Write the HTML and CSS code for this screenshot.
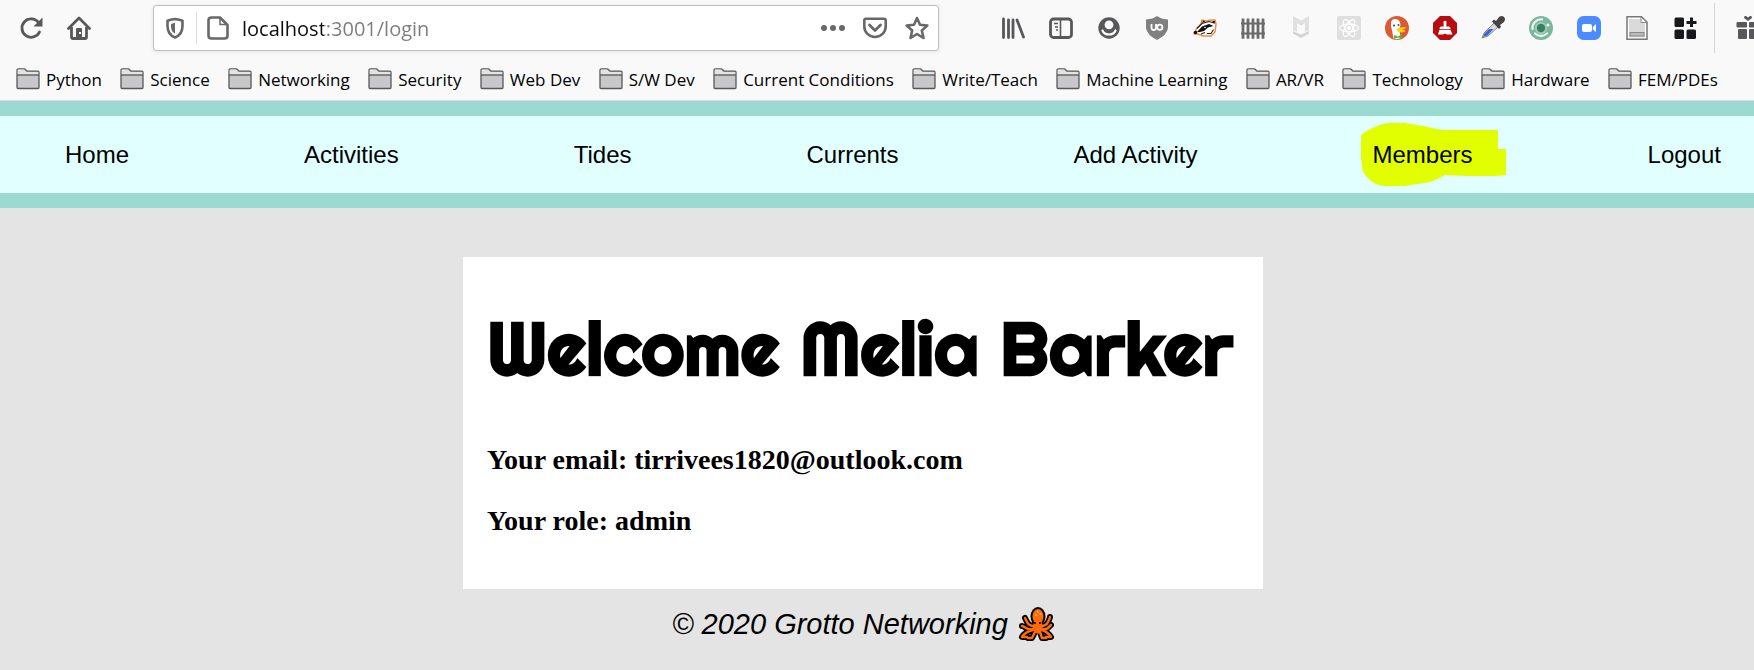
FILE: index.html
```html
<!DOCTYPE html>
<html lang="en">
	<head>
		<meta charset="utf-8">
		<title>Grotto Networking</title>
		<link rel="stylesheet" href="styles.css">
	</head>
	<body>
		<svg class="defs" aria-hidden="true">
			<symbol id="folder" viewBox="0 0 24 24">
				<path d="M1 20.500V3.500Q1 1.800 2.500 1.800H8Q9 1.800 9.600 2.800L11 4.200H22Q23 4.200 23 5.300V20.500Q23 21.500 22 21.500H2Q1 21.500 1 20.500Z" fill="#c8c8ca" stroke="#58585a" stroke-width="1.300"/>
				<path d="M1.700 7.500V3.500Q1.700 2.500 2.600 2.500H8L10.600 5H22.300V7.500Z" fill="#e4e4e5"/>
				<path d="M1 8H23" stroke="#58585a" stroke-width="1.300"/>
			</symbol>
		</svg>
		<div class="chrome">
			<div class="toolbar">
				<button class="tool" aria-label="Reload"><svg viewBox="0 0 24 24"><path d="M20.500 16A9.200 9.200 0 1 1 19.500 6.500" fill="none" stroke="#58585a" stroke-width="2.800" stroke-linecap="round"/><path d="M23.500 1.500V10.500H14.500Z" fill="#58585a"/></svg></button>
				<button class="tool" aria-label="Home"><svg viewBox="0 0 24 24"><path d="M1.500 12.500L12 2L22.500 12.500" fill="none" stroke="#58585a" stroke-width="2.800" stroke-linecap="round" stroke-linejoin="round"/><path d="M4.500 11V21Q4.500 22.500 6 22.500H18Q19.500 22.500 19.500 21V11" fill="none" stroke="#58585a" stroke-width="2.800"/><path d="M9 22V13Q9 12 10 12H14Q15 12 15 13V22Z" fill="#58585a"/><rect x="12" y="16" width="2" height="2" fill="#f9f9fa"/></svg></button>
				<div class="urlbar">
					<button aria-label="Tracking protection"><svg viewBox="0 0 24 24"><path d="M12 3C9 3.300 6 4 4.500 4.700V10C4.500 16 7 19.500 12 21.500C17 19.500 19.500 16 19.500 10V4.700C18 4 15 3.300 12 3Z" fill="none" stroke="#68686a" stroke-width="2.600" stroke-linejoin="round"/><path d="M12 6.800L8 8V11Q8.300 16 12 17.500Z" fill="#68686a"/></svg></button>
					<span class="line"></span>
					<button aria-label="Site information"><svg viewBox="0 0 24 24"><path d="M14 1.500H5.500Q2.500 1.500 2.500 4.500V19.500Q2.500 22.500 5.500 22.500H18.500Q21.500 22.500 21.500 19.500V9Z" fill="none" stroke="#68686a" stroke-width="2.600" stroke-linejoin="round"/><path d="M14 1.500V8.500H21.500" fill="none" stroke="#68686a" stroke-width="1.500"/></svg></button>
					<input class="address" type="text" aria-label="Address" value="localhost:3001/login">
					<button aria-label="Page actions"><svg viewBox="0 0 24 24"><g fill="#68686a"><circle cx="3" cy="12" r="3"/><circle cx="12" cy="12" r="3"/><circle cx="21" cy="12" r="3"/></g></svg></button>
					<button aria-label="Save to Pocket"><svg viewBox="0 0 24 24"><path d="M3 2.700H21Q22.700 2.700 22.700 4.500V10.500A10.700 10.500 0 0 1 1.300 10.500V4.500Q1.300 2.700 3 2.700Z" fill="none" stroke="#68686a" stroke-width="2.600"/><path d="M6.500 9L12 14.500L17.500 9" fill="none" stroke="#68686a" stroke-width="2.800" stroke-linecap="round" stroke-linejoin="round"/></svg></button>
					<button aria-label="Bookmark this page"><svg viewBox="0 0 24 24"><path d="M12 2L15 8.800L22.300 9.600L16.800 14.500L18.500 22L12 18L5.500 22L7.200 14.500L1.700 9.600L9 8.800Z" fill="none" stroke="#68686a" stroke-width="2.600" stroke-linejoin="round"/></svg></button>
				</div>
				<button class="tool" aria-label="Library"><svg viewBox="0 0 24 24"><path d="M2.500 3V21.500M7.500 4V21.500M12 4V21.500M16 4L22.500 21" fill="none" stroke="#58585a" stroke-width="2.800" stroke-linecap="round"/></svg></button>
				<button class="tool" aria-label="Sidebars"><svg viewBox="0 0 24 24"><rect x="1.500" y="3" width="21" height="18.500" rx="3" fill="none" stroke="#58585a" stroke-width="2.800"/><path d="M11.500 3V21M5 7.500H9M6 11H9M7 14H9" stroke="#58585a" stroke-width="1.600"/></svg></button>
				<button class="tool" aria-label="Account"><svg viewBox="0 0 24 24"><circle cx="12" cy="12" r="10.700" fill="#58585a"/><circle cx="12" cy="8.800" r="4.400" fill="#f9f9fa"/><path d="M5.500 14.500Q7 18.500 12 18.500T18.500 14.500" fill="none" stroke="#f9f9fa" stroke-width="2.200" stroke-linecap="round"/></svg></button>
				<button class="tool" aria-label="Content blocker"><svg viewBox="0 0 24 24"><path d="M12 0Q16 3 23 3.500V12Q22 19 12 24Q2 19 1 12V3.500Q8 3 12 0Z" fill="#808080"/><path d="M6.500 8V11.500Q6.500 14 8.800 14T11 11.500V8" fill="none" stroke="#fff" stroke-width="1.800"/><circle cx="14.800" cy="11.200" r="2.600" fill="none" stroke="#fff" stroke-width="1.800"/></svg></button>
				<button class="tool" aria-label="Privacy badger"><svg viewBox="0 0 24 24"><path d="M1 18L4 12L8 8L9 4L13 5L18 4L22 4L23 8L22 16L18 20L10 20L5 18Z" fill="#fff" stroke="#f08a3c" stroke-width="1.500" stroke-linejoin="round"/><path d="M4 16L9 10.500L16 8L20.500 10L15 11.500L11 15L7 16Z" fill="#111"/><path d="M4 12.500L9 7.500L16 5.500L21 7M8 18L12 16.500M14 17.500H18L20.500 13.500" fill="none" stroke="#222" stroke-width="1.100"/><path d="M9 7L10 4.500L12.500 5.500ZM19 5L22 5L21.500 8Z" fill="#111"/><circle cx="2.500" cy="16.500" r="1.800" fill="#111"/><circle cx="12" cy="11.500" r=".800" fill="#fff"/></svg></button>
				<button class="tool" aria-label="Fence"><svg viewBox="0 0 24 24"><path d="M2 2.500V22.800M7 2.500V22.800M12 2.500V22.800M17 2.500V22.800M22 2.500V22.800" stroke="#6b6b6b" stroke-width="2.800"/><path d="M0 7.500H24M0 17.500H24" stroke="#6b6b6b" stroke-width="1.800"/></svg></button>
				<button class="tool" aria-label="Web advisor"><svg viewBox="0 0 24 24"><path d="M4 0L12 4.500L20 0V14L16 16V7L12 9.500L8 7V16L4 14Z" fill="#e0e0e1"/><path d="M4 15L12 18.500L20 15V17.500L12 22L4 17.500Z" fill="#d4d4d5"/></svg></button>
				<button class="tool" aria-label="React tools"><svg viewBox="0 0 24 24"><rect width="24" height="24" rx="2" fill="#dfdfdf"/><g fill="none" stroke="#fff" stroke-width="1.200"><ellipse cx="12" cy="12" rx="9.500" ry="3.800"/><ellipse cx="12" cy="12" rx="9.500" ry="3.800" transform="rotate(60 12 12)"/><ellipse cx="12" cy="12" rx="9.500" ry="3.800" transform="rotate(120 12 12)"/></g><circle cx="12" cy="12" r="2" fill="#fff"/></svg></button>
				<button class="tool" aria-label="Privacy essentials"><svg viewBox="0 0 24 24"><circle cx="12" cy="12" r="12" fill="#de5833"/><path d="M6 6Q7 3 10 3Q15 3 15.500 9L14 14L16 22Q12 24 8.500 22.500Q7 14 6 10Z" fill="#fff"/><circle cx="9" cy="9.500" r="1.100" fill="#2d4f8e"/><circle cx="13.500" cy="9" r="1" fill="#2d4f8e"/><path d="M12 13Q14 11 20.500 11Q22 12 17 13.500Q21 14 20 15.500Q16 17.500 12 15Z" fill="#fdd20a"/><path d="M9 19L13 20.500L17 18.500V23L13 21.500L9 23Z" fill="#4cba3c"/></svg></button>
				<button class="tool" aria-label="History cleaner"><svg viewBox="0 0 24 24"><path d="M7 0H17L24 7V17L17 24H7L0 17V7Z" fill="#b80d0f"/><path d="M10.500 5.500Q12 4 13.500 5.500L13.300 10.500H16Q17.500 10.500 17.500 13H6.500Q6.500 10.500 8 10.500H10.700Z" fill="#fff"/><path d="M6.500 13.800H17.500L19.500 18.500H14L12 17.500L10 18.500H5Z" fill="#fff"/></svg></button>
				<button class="tool" aria-label="Colour picker"><svg viewBox="0 0 24 24"><path d="M1 22L3 17L13 7L17 11L7 20Z" fill="#d7d9df" stroke="#888" stroke-width="1"/><path d="M2 21L3.500 17.500L8 13H12.500L6.500 19.500Z" fill="#3866d8"/><path d="M11 5.500L13 3.500L15 5L18 1Q21 -1 23 1T23 6L19 9L20 11L18 13Z" fill="#444"/></svg></button>
				<button class="tool" aria-label="Target"><svg viewBox="0 0 24 24"><circle cx="12" cy="12" r="12" fill="#7bb79d"/><g fill="none" stroke="#eef7f2" stroke-width="2.200" stroke-linecap="round"><path d="M3.500 13A8.800 8.800 0 0 1 13 3.300M6 17.500Q12 22.500 18 17.500"/></g><circle cx="12" cy="12" r="6" fill="#a0cdb9"/><circle cx="12" cy="12" r="4.200" fill="#3d7e62"/><circle cx="19" cy="9" r="1.500" fill="#fff"/></svg></button>
				<button class="tool" aria-label="Video meeting"><svg viewBox="0 0 24 24"><rect width="24" height="24" rx="6.500" fill="#4a8cff"/><rect x="5" y="8" width="10" height="8" rx="2" fill="#fff"/><path d="M15.800 11L19 8V16L15.800 13.500Z" fill="#fff"/></svg></button>
				<button class="tool" aria-label="Notes"><svg viewBox="0 0 24 24"><path d="M2 .800H16.500L22 6V23.200H2Z" fill="#fff" stroke="#777" stroke-width="1.500"/><path d="M4 3H15.500L20 7V21.500H4Z" fill="#dadada"/><path d="M16 1V6.500H22Z" fill="#fff" stroke="#888"/><rect x="5" y="16.500" width="14" height="3.500" fill="#bbb" stroke="#888"/></svg></button>
				<button class="tool" aria-label="Extensions"><svg viewBox="0 0 24 24"><g fill="#18191b"><rect x="1.500" y="1.500" width="9.500" height="9.500" rx="1.500"/><rect x="1.500" y="13.500" width="9.500" height="9.500" rx="1.500"/><rect x="13.500" y="13.500" width="9.500" height="9.500" rx="1.500"/><path d="M17 1.500H20V5H23.500V8H20V11H17V8H13.500V5H17Z"/></g></svg></button>
				<span class="separator"></span>
				<button class="tool gift" aria-label="What's new"><svg viewBox="0 0 24 24"><g fill="#58585a"><rect x=".500" y="6" width="10.500" height="5.500" rx="1"/><rect x="13" y="6" width="10.500" height="5.500" rx="1"/><rect x="2" y="13" width="9" height="10" rx="1"/><rect x="13" y="13" width="9" height="10" rx="1"/><path d="M12 5L8 2Q8 -.500 10 0L12 1.500L14 0Q16 -.500 16 2Z"/></g></svg></button>
			</div>
			<div class="bookmarks">
				<button><svg><use href="#folder"/></svg>Python</button>
				<button><svg><use href="#folder"/></svg>Science</button>
				<button><svg><use href="#folder"/></svg>Networking</button>
				<button><svg><use href="#folder"/></svg>Security</button>
				<button><svg><use href="#folder"/></svg>Web Dev</button>
				<button><svg><use href="#folder"/></svg>S/W Dev</button>
				<button><svg><use href="#folder"/></svg>Current Conditions</button>
				<button><svg><use href="#folder"/></svg>Write/Teach</button>
				<button><svg><use href="#folder"/></svg>Machine Learning</button>
				<button><svg><use href="#folder"/></svg>AR/VR</button>
				<button><svg><use href="#folder"/></svg>Technology</button>
				<button><svg><use href="#folder"/></svg>Hardware</button>
				<button><svg><use href="#folder"/></svg>FEM/PDEs</button>
			</div>
		</div>
		<nav class="nav">
			<ul>
				<li><a href="#">Home</a></li>
				<li><a href="#">Activities</a></li>
				<li><a href="#">Tides</a></li>
				<li><a href="#">Currents</a></li>
				<li><a href="#">Add Activity</a></li>
				<li class="marked">
					<svg class="marker" viewBox="0 0 146 64" aria-hidden="true"><path d="M0 12L7 7L14 4Q22 0 30 0H44L62 3L81 7H137V26H145V52L134 53H106L84 52Q76 57 69 59L44 63H22Q12 61 7 55Q1 50 1 42L0 35Z" fill="#e2ff00"/></svg>
					<a href="#">Members</a>
				</li>
				<li><a href="#">Logout</a></li>
			</ul>
		</nav>
		<div class="page">
			<main class="card">
				<h1>Welcome Melia Barker</h1>
				<h3>Your email: tirrivees1820@outlook.com</h3>
				<h3>Your role: admin</h3>
			</main>
			<footer class="footer">
				<span>© 2020 Grotto Networking</span>
				<svg class="octopus" viewBox="0 0 36 36" aria-hidden="true">
					<!-- black outline -->
					<ellipse cx="20" cy="10.500" rx="7.500" ry="9.500" fill="#000"/>
					<path d="M14 15H25L26 28H13Z" fill="#000"/>
					<path fill="none" stroke="#000" stroke-width="6" stroke-linecap="round" stroke-linejoin="round" d="M16 20Q11 20 9 16T7 12M23 20Q28 20 30 16T32 11M16 23Q11 24 8 22T4 20M23 23Q28 24 30 22T33 19M15 24Q7 26 4 31H9M24 24Q30 26 33 31H28M17 26L14 32H10M22 26L24 32H28"/>
					<!-- body and arms -->
					<ellipse cx="20" cy="10.500" rx="5.500" ry="7.500" fill="#ff6a0d"/>
					<path d="M16.500 14H23.500L25 24L20 28L14 24Z" fill="#ff6a0d"/>
					<path fill="none" stroke="#ff6a0d" stroke-width="2.500" stroke-linecap="round" stroke-linejoin="round" d="M16 20Q11 20 9 16T7 12M23 20Q28 20 30 16T32 11M16 23Q11 24 8 22T4 20M23 23Q28 24 30 22T33 19M15 24Q7 26 4 31H9M24 24Q30 26 33 31H28M17 26L14 32H10M22 26L24 32H28"/>
					<g fill="#ffb46b"><circle cx="20" cy="6" r="1"/><circle cx="22.500" cy="8" r="1"/><circle cx="18" cy="9" r="1"/></g>
					<g fill="#000"><circle cx="17" cy="17" r="1"/><circle cx="22" cy="17" r="1"/></g>
				</svg>
			</footer>
		</div>
	</body>
</html>
```
FILE: styles.css
```css
*{
	box-sizing: border-box;
}
body{
	margin: 0;
	background: #e4e4e4;
	color: #000;
	overflow-x: hidden;
}
button{
	border: 0;
	padding: 0;
	background: none;
	color: inherit;
	font: inherit;
}
.defs{
	display: none;
}

/* browser bars */
.chrome{
	background: #f9f9fa;
	border-bottom: 1px solid #d8d8d9;
	font-family: "Open Sans", "Noto Sans", sans-serif;
	overflow: hidden;
}
.toolbar{
	display: flex;
	align-items: center;
	height: 56px;
	padding-left: 7px;
}
.toolbar svg{
	display: block;
	width: 24px;
	height: 24px;
	margin: 0 auto;
}
.tool{
	flex: none;
	width: 48px;
	height: 48px;
}
.urlbar{
	display: flex;
	align-items: center;
	flex: 1;
	min-width: 0;
	height: 46px;
	margin: 0 50px;
	background: #fff;
	border: 1px solid #bebebf;
	border-radius: 3px;
	box-shadow: 0 1px 4px rgba(0,0,0,0.08);
}
.urlbar button{
	flex: none;
	width: 42px;
	height: 42px;
}
.line{
	width: 1px;
	height: 32px;
	background: #dcdcdd;
}
.address{
	flex: 1;
	min-width: 0;
	border: 0;
	padding: 2px 3px 0;
	font: 20px/28px "Open Sans", "Noto Sans", sans-serif;
	/* host is black, the rest of the address is grey */
	background: linear-gradient(to right, #0c0c0d 85px, #7c7c7d 85px);
	-webkit-background-clip: text;
	background-clip: text;
	color: transparent;
}
.separator{
	flex: none;
	width: 1px;
	height: 50px;
	margin: 0 9px 0 5px;
	background: #d7d7d8;
}
.gift{
	margin-right: -18px;
}
.bookmarks{
	display: flex;
	justify-content: space-between;
	height: 44px;
	padding: 0 36px 0 16px;
}
.bookmarks button{
	display: flex;
	align-items: center;
	gap: 6px;
	height: 46px;
	font-size: 17px;
	white-space: nowrap;
}
.bookmarks svg{
	width: 24px;
	height: 24px;
}

/* site navigation */
.nav{
	background: #e1ffff;
	border-top: 15px solid #9bdad0;
	border-bottom: 15px solid #9bdad0;
	font: 24px/29px "Liberation Sans", Arial, sans-serif;
}
.nav ul{
	display: flex;
	justify-content: space-between;
	margin: 0;
	padding: 24px 33px 24px 65px;
	list-style: none;
}
.nav a{
	position: relative;
	color: #000;
	text-decoration: none;
}
.marked{
	position: relative;
}
.marker{
	position: absolute;
	left: -12px;
	top: -17px;
	width: 146px;
	height: 64px;
}

/* welcome card */
.page{
	padding: 49px 28px 24px 0;
}
.card{
	max-width: 800px;
	margin: 0 auto;
	padding: 46px 24px 24px;
	background: #fff;
}
.card h1{
	margin: 0 0 50px;
	font: bold 74px/90px Righteous, Lato, sans-serif;
	white-space: nowrap;
}
.card h3{
	margin: 0 0 28px;
	font: bold 28px/33px "Liberation Serif", "Times New Roman", serif;
}
.footer{
	display: flex;
	justify-content: center;
	align-items: center;
	gap: 10px;
	padding-top: 17px;
	font: italic 29px/36px "Liberation Sans", Arial, sans-serif;
}
.octopus{
	width: 36px;
	height: 36px;
}
```
